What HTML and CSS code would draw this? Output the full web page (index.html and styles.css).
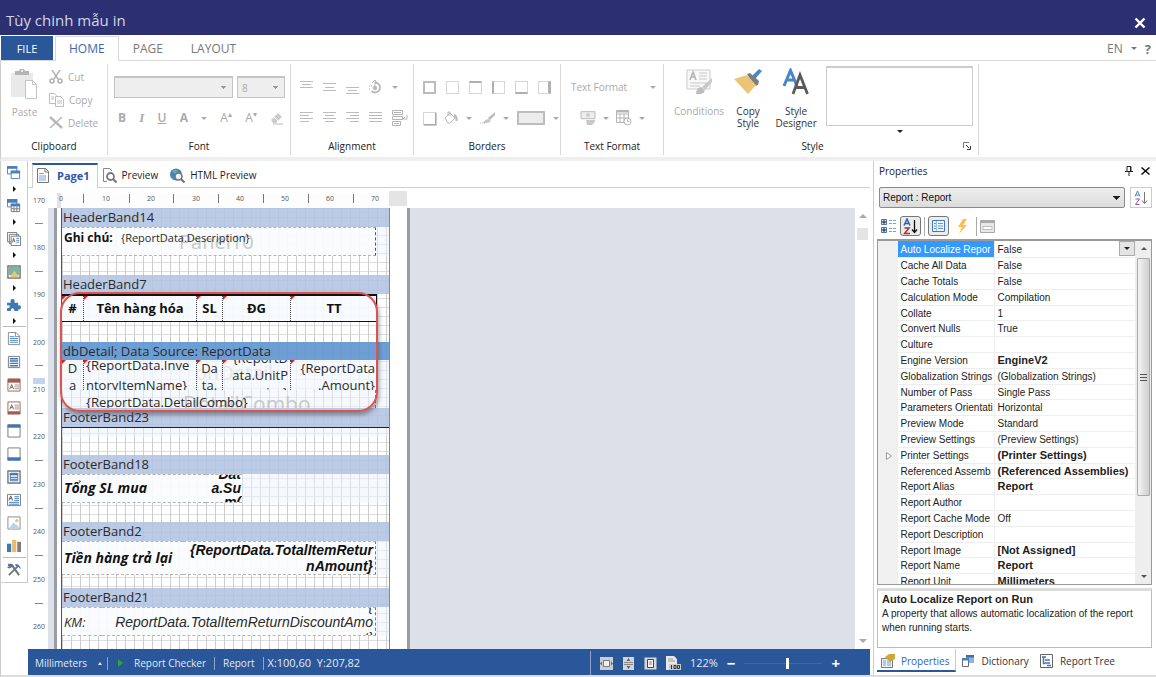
FILE: index.html
```html
<!DOCTYPE html>
<html lang="vi">
<head>
<meta charset="utf-8">
<title>Tùy chinh mẫu in</title>
<link rel="stylesheet" href="styles.css">
</head>
<body>
<header class="titlebar">
  <h1>Tùy chinh mẫu in</h1>
  <button class="close" aria-label="Close"><svg width="12" height="12" viewBox="0 0 12 12"><path d="M1.5 1.5l9 9M10.500 1.500l-9 9" stroke="#fff" stroke-width="2.400"/></svg></button>
</header>

<nav class="tabs">
  <button class="tab file">FILE</button>
  <button class="tab active">HOME</button>
  <button class="tab">PAGE</button>
  <button class="tab">LAYOUT</button>
  <div class="lang"><button class="plain">EN</button><i class="caret dark"></i><button class="plain help">?</button></div>
</nav>

<section class="ribbon">
  <div class="group g-clip">
    <div class="clip">
      <button class="big off">
        <svg width="27" height="30" viewBox="0 0 27 30"><path d="M0 4h22v24H0z" fill="#e9e9e9"/><path d="M4 2h4l1-2h4l1 2h4v4H4z" fill="#b5b5b5"/><circle cx="11" cy="2" r="1" fill="#fff"/><path d="M14.500 11.500h7l4 4v14h-11z" fill="#fff" stroke="#c4c4c4"/><path d="M21.500 11.500v4h4" fill="none" stroke="#c4c4c4"/></svg>
        <span>Paste</span>
      </button>
      <div class="stack">
        <button class="small off"><svg width="14" height="14" viewBox="0 0 14 14" fill="none" stroke="#b4b4b4" stroke-width="1.600"><path d="M3 0l6 9M11 0L5 9"/><circle cx="3" cy="11" r="2"/><circle cx="11" cy="11" r="2"/></svg>Cut</button>
        <button class="small off"><svg width="15" height="14" viewBox="0 0 15 14" fill="#fff" stroke="#bdbdbd"><path d="M.5.500h5l2 2v8h-7z"/><path d="M6.500 3.500h5l3 3v7h-8z"/><path d="M2 4h3M2 6h3M8 8h5M8 10h5"/></svg>Copy</button>
        <button class="small off"><svg width="14" height="13" viewBox="0 0 14 13" fill="none" stroke="#b8b8b8"><path d="M1 1l12 11" stroke-width="2.400"/><path d="M13 1L1 12" stroke-width="1.600"/></svg>Delete</button>
      </div>
    </div>
    <h2>Clipboard</h2>
  </div>

  <div class="group g-font">
    <div class="row r1">
      <select class="sel wide" aria-label="Font family"><option></option></select>
      <select class="sel" aria-label="Font size"><option>8</option></select>
    </div>
    <div class="row r2 letters">
      <button><b>B</b></button><button><b class="it">I</b></button><button><b class="un">U</b></button><button><b>A</b></button><i class="caret"></i><button>A<sup>▴</sup></button><button>A<sup>▾</sup></button>
      <button aria-label="Clear"><svg width="14" height="13" viewBox="0 0 14 13"><path d="M1 8l7-7 4 4-6 6H3z" fill="#ccc"/><path d="M4 5l4 4" stroke="#fff"/><path d="M3 12h10" stroke="#bbb"/></svg></button>
    </div>
    <h2>Font</h2>
  </div>

  <div class="group g-align">
    <div class="row r1">
      <svg width="13" height="16" viewBox="0 0 13 16" stroke="#bcbcbc"><path d="M0 2.500h13M2 5.500h9M0 8.500h13"/></svg>
      <svg width="13" height="16" viewBox="0 0 13 16" stroke="#bcbcbc"><path d="M0 4.500h13M2 8.500h9M0 11.500h13"/></svg>
      <svg width="13" height="16" viewBox="0 0 13 16" stroke="#bcbcbc"><path d="M0 8.500h13M2 11.500h9M0 14.500h13"/></svg>
      <svg width="13" height="16" viewBox="0 0 13 16" fill="none" stroke="#b8b8b8"><path d="M6 3.500a5 5 0 1 1-3.500 8.500" stroke-width="1.800"/><path d="M6 1v9M3 4l3-3 2 3" /><circle cx="6" cy="9" r="1.800" fill="#b8b8b8"/><path d="M0 7h3M0 10h2" stroke-dasharray="1 1"/></svg>
      <i class="caret"></i>
    </div>
    <div class="row r2">
      <svg width="13" height="14" viewBox="0 0 13 14" stroke="#bcbcbc"><path d="M0 1.500h13M0 4.500h9M0 7.500h13M0 10.500h9"/></svg>
      <svg width="13" height="14" viewBox="0 0 13 14" stroke="#bcbcbc"><path d="M0 1.500h13M2 4.500h9M0 7.500h13M2 10.500h9"/></svg>
      <svg width="13" height="14" viewBox="0 0 13 14" stroke="#bcbcbc"><path d="M0 1.500h13M4 4.500h9M0 7.500h13M4 10.500h9"/></svg>
      <svg width="13" height="14" viewBox="0 0 13 14" stroke="#bcbcbc"><path d="M0 1.500h13M0 4.500h13M0 7.500h13M0 10.500h13"/></svg>
      <svg width="16" height="16" viewBox="0 0 16 16" fill="none" stroke="#b4b4b4"><path d="M.5.500h10v4H.5zM.5 6.500h10v3H.5zM.5 11.500h8v4h-8zM2 2.500h7M2 13.500h5"/><path d="M15 5v4h-4l2-2"/></svg>
    </div>
    <h2>Alignment</h2>
  </div>

  <div class="group g-border">
    <div class="row r1">
      <i class="bx all"></i><i class="bx"></i><i class="bx top"></i><i class="bx left"></i><i class="bx bottom"></i><i class="bx right"></i>
    </div>
    <div class="row r2">
      <i class="bx sh"></i>
      <svg class="pour" width="14" height="14" viewBox="0 0 14 14" fill="none" stroke="#b8b8b8"><path d="M1 7l5-5 5 5-5 5H4z"/><path d="M4 5V1h2v4"/><path d="M10 4q3 1 2.500 6" stroke-width="2"/></svg>
      <i class="caret"></i>
      <svg width="15" height="12" viewBox="0 0 15 12"><path d="M15 0v3l-5 5-2-2z" fill="#bbb"/><path d="M9 7l2 2q-3 3-8 2 2-4 6-4z" fill="#c8c8c8"/><path d="M0 11h5" stroke="#bbb" stroke-dasharray="1 1"/></svg>
      <i class="caret"></i><i class="swatch"></i><i class="caret"></i>
    </div>
    <h2>Borders</h2>
  </div>

  <div class="group g-text">
    <div class="row r1"><button class="off">Text Format</button><i class="caret"></i></div>
    <div class="row r2">
      <svg width="16" height="14" viewBox="0 0 16 14"><path d="M1 .7h14v7H1z" fill="#eee" stroke="#bbb"/><circle cx="8" cy="4" r="2" fill="#ccc"/><path d="M6 9h9v2l-3 3H7z" fill="#c9c9c9"/></svg>
      <i class="caret"></i>
      <svg width="16" height="16" viewBox="0 0 16 16" fill="none" stroke="#b5b5b5"><path d="M.5.500h12v12H.5zM.5 4h12M4 4v8M8 4v8M.5 8h12"/><path d="M.5 1.500h12" stroke-width="2"/><circle cx="11.500" cy="11.500" r="3.500" fill="#fff"/><path d="M11.500 9.500v2h2"/></svg>
      <i class="caret"></i>
    </div>
    <h2>Text Format</h2>
  </div>

  <div class="group g-style">
    <div class="styles">
      <button class="big off">
        <svg width="27" height="28" viewBox="0 0 27 28"><path d="M1 2h23v19H1z" fill="#f8f8f8" stroke="#ccc"/><path d="M4 12l3-8 3 8M5 9h4" stroke="#b5b5b5" stroke-width="1.600" fill="none"/><path d="M13 5h8M13 8h8M13 11h8M4 15h17M4 18h10" stroke="#c8c8c8"/><path d="M26 10v4l-7 8-3-3z" fill="#c8c8c8"/><path d="M15 19l4 4q-3 4-9 3 0-6 5-7z" fill="#bcbcbc"/></svg>
        <span>Conditions</span>
      </button>
      <button class="big">
        <svg width="28" height="28" viewBox="0 0 28 28"><path d="M28 3l-3-2-7 7 3 3z" fill="#4a86c5"/><path d="M13 6l3-1 9 8-1 4-4 1z" fill="#7d7d7d"/><path d="M0 11l13-4 9 10-8 9z" fill="#ecc477"/></svg>
        <span>Copy<br>Style</span>
      </button>
      <button class="big">
        <svg width="28" height="28" viewBox="0 0 28 28" fill="none"><path d="M2 18L8.500 2.500 15 18M4.500 12h8" stroke="#4a86c5" stroke-width="3"/><path d="M11 26l7-19 7.500 19M13.500 19.500h9.500" stroke="#5a5a5a" stroke-width="2.800"/></svg>
        <span>Style<br>Designer</span>
      </button>
      <div class="gallery"><div class="gbox"></div><i class="caret black"></i></div>
    </div>
    <h2>Style<svg class="launch" width="8" height="8" viewBox="0 0 8 8"><path d="M.5 6V.5H6" fill="none" stroke="#777"/><path d="M3 3l3 3M7.500 4v3.500H4" stroke="#333" fill="none"/></svg></h2>
  </div>
</section>

<main class="main">
  <aside class="tools">
    <button class="t"><svg viewBox="0 0 15 15"><path d="M.5.500h10v8H.5z" fill="#fff" stroke="#4a7fb8"/><path d="M0 0h11v3H0z" fill="#4a7fb8"/><path d="M4.500 5.500h9v8h-9z" fill="#fff" stroke="#4a7fb8"/><path d="M4 5h10v3H4z" fill="#4a7fb8"/></svg></button><i class="more"></i>
    <button class="t"><svg viewBox="0 0 15 15"><path d="M.5.500h10v8H.5z" fill="#fff" stroke="#4a7fb8"/><path d="M0 0h11v4H0z" fill="#4a7fb8"/><path d="M4.500 5.500h9v8h-9zM4.500 10.500h9M7.500 8v6M10.500 8v6" fill="#fff" stroke="#777"/><path d="M4 5h10v3H4z" fill="#4a7fb8"/></svg></button><i class="more"></i>
    <button class="t"><svg viewBox="0 0 15 15"><path d="M.5.500h10v10H.5zM2.500 2.500h10v10h-10z" fill="#fff" stroke="#777"/><path d="M4.500 4.500h10v10h-10z" fill="#fff" stroke="#777"/><path d="M6 11l1-4 1.500 4" stroke="#555" fill="none"/><path d="M10 7h3M10 9h3M10 11h3" stroke="#4a86c5"/></svg></button><i class="more"></i>
    <button class="t"><svg viewBox="0 0 15 15"><path d="M1 1h13v13H1z" fill="#fff" stroke="#777" stroke-width="1.600"/><path d="M2 2h11v9H2z" fill="#78b5a8"/><path d="M3 13l5-7 5 7z" fill="#ecc477"/></svg></button><i class="more"></i>
    <button class="t"><svg viewBox="0 0 15 15"><path d="M0 5h4q-1-4 2-4t2 4h4v3q3-1 3 2t-3 2v2H8q0-3-2-3t-2 3H0v-3q3 0 3-2T0 8z" fill="#3f78b5"/></svg></button><i class="more"></i>
    <hr>
    <button class="t"><svg viewBox="0 0 15 15"><path d="M1.500.5h8l4 4v9h-12z" fill="#fff" stroke="#888"/><path d="M9 0v5h5" fill="none" stroke="#888"/><path d="M3 5h5M3 7h9M3 9h9M3 11h9" stroke="#4a86c5"/></svg></button>
    <button class="t"><svg viewBox="0 0 15 15"><path d="M1.500 1.500h12v12h-12z" fill="#fff" stroke="#777"/><path d="M3 4h9M3 6.500h9M3 9h9M3 11.500h9" stroke="#3f78b5" stroke-width="1.500"/></svg></button>
    <button class="t"><svg viewBox="0 0 15 15"><path d="M1 1h13v13H1z" fill="#fff" stroke="#a06055"/><path d="M1 1h13v4H1z" fill="#a85a4c"/><path d="M3 12l2-5 2 5M4 10h2" stroke="#666" fill="none"/><path d="M8 7.500h5M8 9.500h5M8 11.500h5" stroke="#999"/></svg></button>
    <button class="t"><svg viewBox="0 0 15 15"><path d="M1 1h13v13H1z" fill="#fff" stroke="#a06055"/><path d="M1 11h13v3H1z" fill="#a85a4c"/><path d="M3 9l2-5 2 5M4 7h2" stroke="#666" fill="none"/><path d="M8 4.500h5M8 6.500h5M8 8.500h5" stroke="#999"/></svg></button>
    <button class="t"><svg viewBox="0 0 15 15"><path d="M1 1h13v13H1z" fill="#fff" stroke="#777"/><path d="M.5.500h14V4H.5z" fill="#3f78b5"/></svg></button>
    <button class="t"><svg viewBox="0 0 15 15"><path d="M1 1h13v13H1z" fill="#fff" stroke="#777"/><path d="M.5 11h14v3.500H.5z" fill="#3f78b5"/></svg></button>
    <button class="t"><svg viewBox="0 0 15 15"><path d="M1 1h13v13H1z" fill="#fff" stroke="#777" stroke-width="1.500"/><path d="M3.500 3.500h8v8h-8zM4 8h7M4 10h7" fill="#dde8f5" stroke="#3f78b5"/><path d="M3 4.500h9" stroke="#3f78b5" stroke-width="2"/></svg></button>
    <button class="t"><svg viewBox="0 0 15 15"><path d="M.5 1.500h14v12H.5z" fill="#fff" stroke="#777"/><path d="M2 8l2-5 2 5M3 6h2" stroke="#555" fill="none"/><path d="M8 4h5M8 6h5M8 8h5M2 10h11M2 12h11" stroke="#3f78b5"/></svg></button>
    <button class="t"><svg viewBox="0 0 15 15"><path d="M1 1h13v13H1z" fill="#fff" stroke="#888"/><path d="M2 13l5-6 3 3 1-1 2 4z" fill="#b9d3ea"/><circle cx="10.500" cy="5" r="1.800" fill="#ecc477"/></svg></button>
    <button class="t"><svg viewBox="0 0 15 15"><path d="M0 5h4.500v9H0z" fill="#3f78b5"/><path d="M5.500 1H10v13H5.500z" fill="#e8bb68"/><path d="M11 3h4v11h-4z" fill="#7d7d7d"/></svg></button>
    <hr>
    <button class="t"><svg viewBox="0 0 15 15"><path d="M2 13L12 3" stroke="#777" stroke-width="2"/><path d="M1 2l4 0 8 11" stroke="#777" stroke-width="2.200" fill="none"/><path d="M0 5l5-4 2 2-4 3zM9 1q5 0 6 6l-3-3-3-1z" fill="#3f78b5"/></svg></button>
  </aside>

  <section class="work">
    <nav class="docs">
      <button class="doc on"><svg width="12" height="15" viewBox="0 0 12 15"><path d="M.5.500h8l3 3v11H.5z" fill="#fff" stroke="#777"/><path d="M8 0v4h4" fill="none" stroke="#777"/><path d="M2 5.500h5M2 8h7M2 10h7M2 12h7" stroke="#7fa6d0"/></svg>Page1</button>
      <button class="doc"><svg width="15" height="15" viewBox="0 0 15 15" fill="none"><path d="M5 13.500H1.500V.5h6l2.500 2.500" stroke="#888"/><circle cx="8.500" cy="8.500" r="3.500" stroke="#777" stroke-width="1.800"/><path d="M11 11l3.500 3.500" stroke="#777" stroke-width="2.200"/></svg>Preview</button>
      <button class="doc"><svg width="15" height="15" viewBox="0 0 15 15"><circle cx="6" cy="6.500" r="6" fill="#4583bd"/><path d="M2 3q3-3 6 0l-3 3zM1 8l3 3-1 1z" fill="#63b389"/><circle cx="8.500" cy="8.500" r="3.500" fill="#eef4fa" stroke="#777" stroke-width="1.600"/><path d="M11 11l3.500 3.500" stroke="#777" stroke-width="2.200"/></svg>HTML Preview</button>
    </nav>

    <svg class="hruler" height="20">
      <rect x="29" y="5" width="350" height="15" fill="#fdfdfd"/><rect x="29" y="5" width="4" height="15" fill="#e2e2e2"/><rect x="361" y="3" width="18" height="15" fill="#e4e4e4"/>
      <g class="num"><text x="33" y="13">0</text><text x="78" y="13">10</text><text x="123" y="13">20</text><text x="168" y="13">30</text><text x="212" y="13">40</text><text x="257" y="13">50</text><text x="302" y="13">60</text><text x="347" y="13">70</text></g>
      <path d="M55.500 6v9M101.500 6v9M145.500 6v9M190.500 6v9M235.500 6v9M280.500 6v9M325.500 6v9" stroke="#777"/>
    </svg>

    <div class="design">
      <svg class="vruler" width="20" height="441">
        <rect x="5" y="170" width="12" height="6" fill="#c3d5ee"/>
        <g class="num"><text x="11" y="-5">170</text><text x="11" y="42">180</text><text x="11" y="89">190</text><text x="11" y="137">200</text><text x="11" y="184">210</text><text x="11" y="231">220</text><text x="11" y="279">230</text><text x="11" y="326">240</text><text x="11" y="374">250</text><text x="11" y="421">260</text></g>
        <path d="M7 15.500h8M7 63.500h8M7 110.500h8M7 157.500h8M7 205.500h8M7 252.500h8M7 300.500h8M7 347.500h8M7 395.500h8" stroke="#888"/>
      </svg>
      <div class="surface">
        <div class="paper">
          <div class="bands">
            <section class="band"><h3>HeaderBand14</h3><div class="area a29">
              <div class="cmp note">Ghi chú:</div><div class="cmp desc"><span class="ghost gh1">Panel10</span><span class="over">{ReportData.Description}</span></div></div></section>
            <section class="band b7"><h3>HeaderBand7</h3>
              <div class="area cells head"><b class="c1">#</b><b class="c2">Tên hàng hóa</b><b class="c3">SL</b><b class="c4">ĐG</b><b class="c5">TT</b></div></section>
            <section class="band db"><h3>dbDetail; Data Source: ReportData</h3>
              <div class="area a48">
                <span class="ghost gh2">onDetail</span><span class="ghost gh3">DetailCombo</span>
                <div class="cells data"><span class="c1">D<br>a</span><span class="c2"><em class="up">{ReportData.Inve<br>ntoryItemName}</em></span><span class="c3">Da<br>ta.</span><span class="c4"><em class="up more-up">{ReportD<br>ata.UnitP<br>rice}</em></span><span class="c5">{ReportData<br>.Amount}</span></div>
                <div class="combo">{ReportData.DetailCombo}</div>
              </div></section>
            <section class="band f23"><h3>FooterBand23</h3><div class="area a10"></div></section>
            <section class="band"><h3>FooterBand18</h3><div class="area a29">
              <div class="cmp sum bi">Tổng SL mua</div><div class="cmp sumv abi"><em>Dat<br>a.Su<br>m(</em></div></div></section>
            <section class="band f2"><h3>FooterBand2</h3><div class="area a34">
              <div class="cmp ret bi">Tiền hàng trả lại</div><div class="cmp retv abi">{ReportData.TotalItemRetur<br>nAmount}</div></div></section>
            <section class="band"><h3>FooterBand21</h3><div class="area a29">
              <div class="cmp km">KM:</div><div class="cmp kmv"><em>{<br>ReportData.TotalItemReturnDiscountAmo<br>unt}</em></div></div></section>
            <div class="callout"></div>
          </div>
        </div>
      </div>
      <div class="vscroll"><i class="up-a"></i><i class="thumb"></i><i class="dn-a"></i></div>
    </div>

    <footer class="status">
      <button class="unit">Millimeters</button><i class="tri"></i><i class="bar"></i><i class="play"></i>
      <button>Report Checker</button><i class="bar"></i><button>Report</button><i class="bar"></i><span class="coords">X:100,60&nbsp; Y:207,82</span>
      <div class="zoomer"><i class="bar tall"></i>
        <svg width="13" height="13" viewBox="0 0 13 13"><path d="M0 0h13v13H0z" fill="#c9ccd2"/><path d="M3.500 3.500h6v6h-6z" fill="#eee" stroke="#777"/><path d="M0 6.500l2-2v4zM13 6.500l-2-2v4z" fill="#666"/></svg>
        <svg width="13" height="13" viewBox="0 0 13 13"><path d="M1 0h11v13H1z" fill="#d5d5d5"/><path d="M2 5.500h9M2 7.500h9" stroke="#888"/><path d="M6.500 1l2 3h-4zM6.500 12l2-3h-4z" fill="#666"/></svg>
        <svg width="13" height="13" viewBox="0 0 13 13"><path d="M.5.500h12v12H.5z" fill="#d8d8d8"/><path d="M3.500 2.500h6v8h-6z" fill="#f5f5f5" stroke="#444"/><path d="M5 5h3M5 7h3" stroke="#888"/></svg>
        <svg width="15" height="15" viewBox="0 0 15 15"><path d="M0 0h8l3 3v11H0z" fill="#e8e8e8"/><path d="M2 3h5M2 5h7" stroke="#999"/><path d="M3 8h12v6H3z" fill="#c9c9c9"/><path d="M5.500 9v4M8 9.500h2v3H8zM11.500 9.500h2v3h-2z" stroke="#333" fill="none"/></svg>
        <span class="pct">122%</span><button class="pm">−</button><div class="track"><i></i></div><button class="pm">+</button>
      </div>
    </footer>
  </section>

  <aside class="props">
    <div class="phead"><h2>Properties</h2>
      <svg width="8" height="10" viewBox="0 0 8 10"><path d="M2 .500h4v5H2zM5.500 1v4M0 5.500h8M4 6v4" fill="none" stroke="#222"/></svg>
      <svg width="9" height="8" viewBox="0 0 9 8"><path d="M.5.500l8 7M8.500.500l-8 7" stroke="#111" stroke-width="1.500"/></svg></div>
    <div class="pobj"><select aria-label="Object"><option>Report : Report</option></select>
      <button class="az" aria-label="Sort"><svg width="14" height="16" viewBox="0 0 14 16" fill="none"><path d="M1 6.500L3.500 1 6 6.500M2 5h3" stroke="#4a86c5"/><path d="M1.500 9h4l-4 5.500h4" stroke="#9c4fb5"/><path d="M10.500 2v11M8 10.500l2.500 3 2.500-3" stroke="#777"/></svg></button></div>
    <div class="pbar">
      <button><svg width="16" height="16" viewBox="0 0 16 16" fill="none"><path d="M.5 1.500h5v5h-5zM.5 9.500h5v5h-5z" fill="#dce9f8" stroke="#3f78b5"/><path d="M1 4h4M3 2v4M1 12h4M3 10v4" stroke="#222"/><path d="M8 2.500h3M12 2.500h3M8 5.500h3M12 5.500h3M8 10.500h3M12 10.500h3M8 13.500h3M12 13.500h3" stroke="#8a9db8"/></svg></button>
      <button class="press"><svg width="15" height="17" viewBox="0 0 15 17" fill="none"><path d="M1 7.500L4 1l3 6.500M2 5.500h4" stroke="#2c62b0" stroke-width="1.500"/><path d="M1.500 10H6l-4.500 5.500H7" stroke="#a83232" stroke-width="1.500"/><path d="M11.500 2v12M9 11.500l2.500 3 2.500-3" stroke="#111" stroke-width="1.300"/></svg></button>
      <i class="sep"></i>
      <button class="press"><svg width="13" height="13" viewBox="0 0 13 13"><path d="M.5.500h12v11H.5z" fill="#eef5fd" stroke="#3f78c5"/><path d="M4.500 1v10" stroke="#9dc1ea"/><path d="M2 3.500h2M6 3.500h5M2 6h2M6 6h5M2 8.500h2M6 8.500h5" stroke="#5d9be0"/></svg></button>
      <button><svg width="11" height="15" viewBox="0 0 11 15"><path d="M6 0L1 8h4l-3 7 8-9H6l4-6z" fill="#f8c04a"/></svg></button>
      <i class="sep"></i>
      <button><svg width="15" height="15" viewBox="0 0 15 15"><path d="M.5 1.500h14v12H.5z" fill="#e8e8e8" stroke="#aaa"/><path d="M1 3h13" stroke="#aaa" stroke-width="2"/><path d="M3 7.500h9v3H3z" fill="#fff" stroke="#bbb"/></svg></button>
    </div>
    <div class="pgrid">
      <div class="pscroll">
      <table>
        <tr class="cur"><td class="gut"></td><th>Auto Localize Repor</th><td>False<button class="drop" aria-label="Open"><i class="caret black"></i></button></td></tr>
        <tr><td class="gut"></td><th>Cache All Data</th><td>False</td></tr>
        <tr><td class="gut"></td><th>Cache Totals</th><td>False</td></tr>
        <tr><td class="gut"></td><th>Calculation Mode</th><td>Compilation</td></tr>
        <tr><td class="gut"></td><th>Collate</th><td>1</td></tr>
        <tr><td class="gut"></td><th>Convert Nulls</th><td>True</td></tr>
        <tr><td class="gut"></td><th>Culture</th><td></td></tr>
        <tr><td class="gut"></td><th>Engine Version</th><td class="bd">EngineV2</td></tr>
        <tr><td class="gut"></td><th>Globalization Strings</th><td>(Globalization Strings)</td></tr>
        <tr><td class="gut"></td><th>Number of Pass</th><td>Single Pass</td></tr>
        <tr><td class="gut"></td><th>Parameters Orientati</th><td>Horizontal</td></tr>
        <tr><td class="gut"></td><th>Preview Mode</th><td>Standard</td></tr>
        <tr><td class="gut"></td><th>Preview Settings</th><td>(Preview Settings)</td></tr>
        <tr><td class="gut"><svg width="6" height="8" viewBox="0 0 6 8"><path d="M.5.500L5.500 4 .5 7.500z" fill="#fff" stroke="#999"/></svg></td><th>Printer Settings</th><td class="bd">(Printer Settings)</td></tr>
        <tr><td class="gut"></td><th>Referenced Assemb</th><td class="bd">(Referenced Assemblies)</td></tr>
        <tr><td class="gut"></td><th>Report Alias</th><td class="bd">Report</td></tr>
        <tr><td class="gut"></td><th>Report Author</th><td></td></tr>
        <tr><td class="gut"></td><th>Report Cache Mode</th><td>Off</td></tr>
        <tr><td class="gut"></td><th>Report Description</th><td></td></tr>
        <tr><td class="gut"></td><th>Report Image</th><td class="bd">[Not Assigned]</td></tr>
        <tr><td class="gut"></td><th>Report Name</th><td class="bd">Report</td></tr>
        <tr><td class="gut"></td><th>Report Unit</th><td class="bd">Millimeters</td></tr>
      </table>
      </div>
      <div class="pvs"><i class="up-a"></i><div class="pthumb"><i></i><i></i><i></i></div><i class="dn-a"></i></div>
    </div>
    <div class="pdesc"><h3>Auto Localize Report on Run</h3><p>A property that allows automatic localization of the report<br>when running starts.</p></div>
    <nav class="ptabs">
      <button class="on"><svg width="15" height="15" viewBox="0 0 15 15"><path d="M.5 5.500h11v9H.5z" fill="#eef4fa" stroke="#778"/><path d="M2 8h3M2 10h3M2 12h3M6 8h4M6 10h4M6 12h4" stroke="#7a9cc5"/><path d="M4 4l4-3h6v5l-5 3z" fill="#cda83c"/></svg>Properties</button>
      <button><svg width="12" height="12" viewBox="0 0 12 12"><path d="M4 0h8v8H4z" fill="#8fb3dc"/><path d="M4 0h8v2.500H4z" fill="#3f6fa8"/><path d="M.5 3.500h6v8h-6z" fill="#fff" stroke="#667"/><path d="M0 3h7v2.500H0z" fill="#4a7fb8"/></svg>Dictionary</button>
      <button><svg width="13" height="14" viewBox="0 0 13 14"><path d="M.5.500h12v13H.5z" fill="#fff" stroke="#666"/><path d="M2 3h4M5 6h5M5 9h5M7 11.500h4M3.500 3v6.500h1.500" stroke="#3f78b5" stroke-width="1.500" fill="none"/></svg>Report Tree</button>
    </nav>
  </aside>
</main>
</body>
</html>
```
FILE: styles.css
```css
* { box-sizing: border-box; }
html, body { height: 100%; }
body { margin: 0; display: flex; flex-direction: column; overflow: hidden; background: #fff; color: #333; font: 10px/12px "Open Sans", "Noto Sans", sans-serif; }
h1, h2, h3, p { margin: 0; font-weight: 400; font-size: inherit; }
button { border: 0; background: none; padding: 0; margin: 0; font: inherit; color: inherit; }
svg { display: block; flex: none; }
i { flex: none; }

.titlebar { height: 35px; flex: none; background: #2c3072; display: flex; align-items: center; justify-content: space-between; padding: 4px 10px 0 6px; }
.titlebar h1 { font-size: 15px; line-height: 24px; color: #d3d5e6; }
.close { padding-top: 6px; }

.tabs { height: 26px; flex: none; display: flex; align-items: flex-end; border-bottom: 1px solid #d8d8d8; padding-left: 1px; }
.tab { height: 24px; font-size: 12px; padding: 2px 14px 0; color: #777; }
.tab.file { background: #2a579a; color: #fff; width: 52px; font-size: 11px; margin-right: 2px; }
.tab.active { border: 1px solid #d8d8d8; border-bottom: 0; background: #fff; color: #3d66a8; height: 25px; margin-bottom: -1px; padding: 0 13px; }
.lang { margin-left: auto; align-self: center; display: flex; align-items: center; gap: 8px; padding: 2px 5px 0 0; color: #777; font-size: 12px; }
.help { font-weight: 700; font-size: 13px; }
.caret { border: 3px solid transparent; border-top-color: #aaa; border-bottom: 0; width: 6px; height: 3px; }
.caret.dark { border-top-color: #777; }
.caret.black { border-top-color: #222; }

.ribbon { height: 100px; flex: none; display: flex; border-bottom: 4px solid #eee; border-left: 1px solid #ccc; padding: 3px 0 2px; }
.group { display: flex; flex-direction: column; border-right: 1px solid #dadada; flex: none; }
.group h2 { text-align: center; margin-top: auto; line-height: 18px; color: #222; position: relative; }
.g-clip { width: 107px; }
.g-font { width: 183px; }
.g-align { width: 123px; }
.g-border { width: 147px; }
.g-text { width: 103px; }
.g-style { width: 315px; }
.row { display: flex; align-items: center; flex: none; }
.r1 { height: 32px; margin-top: 7px; }
.r2 { height: 30px; }
.off { color: #aaa; }
.clip { display: flex; align-items: flex-start; padding: 1px 0 0 10px; gap: 11px; }
.big { display: flex; flex-direction: column; align-items: center; gap: 7px; }
.clip .big { margin-top: 4px; }
.stack { display: flex; flex-direction: column; }
.small { display: flex; align-items: center; gap: 5px; height: 23px; }
.sel { height: 22px; width: 48px; border: 1px solid #c4c4c4; border-top-width: 2px; color: #aaa; font: inherit; padding: 0 4px; appearance: none; background: conic-gradient(from -45deg at 50% 100%, #999 90deg, transparent 0) right 6px center / 6px 3px no-repeat, #eee; }
.sel.wide { width: 119px; }
.g-font .r1 { padding-left: 6px; gap: 4px; }
.letters { padding: 0 6px 0 10px; justify-content: space-between; font-size: 12px; line-height: 18px; color: #aaa; }
.letters .it { font-style: italic; font-family: "Liberation Serif", serif; font-size: 13px; }
.letters .un { text-decoration: underline; font-weight: 600; }
.letters sup { font-size: 8px; line-height: 8px; }
.g-align .row, .g-border .row { padding-left: 9px; gap: 10px; }
.g-border .r2 { gap: 8px; }
.bx { width: 13px; height: 13px; border: 1px solid #d6d6d6; }
.bx.all { border: 2px solid #bcbcbc; }
.bx.top { border-top: 2px solid #b0b0b0; }
.bx.left { border-left: 2px solid #b0b0b0; }
.bx.bottom { border-bottom: 2px solid #b0b0b0; }
.bx.right { border-right: 3px solid #b0b0b0; }
.bx.sh { border-right-color: #aaa; border-bottom-color: #aaa; box-shadow: 1px 1px #ccc; }
.swatch { width: 28px; height: 14px; background: #ececec; border: 2px solid #bdbdbd; }
.g-text .r1 { justify-content: space-between; padding: 0 7px 0 10px; }
.g-text .r2 { padding-left: 19px; gap: 7px; }
.styles { display: flex; padding: 4px 5px 0 10px; }
.styles .big { gap: 9px; height: 64px; margin-right: 10px; }
.styles .big + .big { width: 28px; margin-right: 14px; }
.styles .big + .big + .big { width: 40px; margin-right: 10px; }
.gallery { flex: 1; display: flex; flex-direction: column; align-items: center; gap: 4px; }
.gbox { align-self: stretch; height: 60px; border: 1px solid #ccc; border-top: 2px solid #ccc; margin-top: -2px; }
.launch { position: absolute; right: 7px; top: 5px; }
.g-style h2 { padding-right: 17px; }

.main { flex: 1; min-height: 0; display: flex; border-bottom: 2px solid #ddd; border-left: 1px solid #ccc; }
.tools { width: 27px; flex: none; align-self: flex-start; border: 1px solid #ccc; border-width: 0 1px 1px 0; display: flex; flex-direction: column; align-items: center; padding-bottom: 1px; }
.t { height: 23px; display: grid; place-items: center; padding-top: 1px; }
.t svg { width: 14px; height: 14px; }
.more { height: 10px; display: flex; align-items: center; }
.more::before { content: ""; border: 3px solid transparent; border-left-color: #111; border-right: 0; }
.tools hr { width: 23px; border: 0; border-top: 1px solid #bbb; margin: 0; }

.work { flex: 1; min-width: 0; display: flex; flex-direction: column; background: #fff; }
.docs { height: 27px; flex: none; display: flex; align-items: flex-end; border-bottom: 1px solid #d0d0d0; padding-left: 4px; gap: 4px; margin-right: 3px; }
.doc { display: flex; align-items: center; gap: 5px; height: 24px; padding-right: 8px; color: #222; }
.doc.on { border-top: 2px solid #2a57a5; border-right: 1px solid #d0d0d0; border-left: 1px solid #d0d0d0; background: #fff; margin-bottom: -1px; font-weight: 700; font-size: 11px; color: #2f55a8; padding: 0 7px 2px 4px; height: 25px; gap: 8px; }
.hruler { width: 100%; }
.num { font: 7px "Open Sans", sans-serif; text-anchor: middle; fill: #555; }
.design { flex: 1; min-height: 0; display: flex; }
.vruler { overflow: visible; }
.surface { flex: 1; min-width: 0; background: #dce1e9; padding-left: 6px; display: flex; overflow: hidden; }
.paper { background: #fff; border: solid #9a9da3; border-width: 0 3px; padding: 0 17px 0 4px; align-self: flex-start; }
.bands { position: relative; width: 329px; font-size: 13px; line-height: 18px; color: #2a2a2a; border-right: 1px solid #888; border-left: 1px solid #555;
  background: repeating-linear-gradient(90deg, #cdcdcd 0 1px, transparent 1px 9px), repeating-linear-gradient(#dedede 0 1px, transparent 1px 9px), #fff; }
.band { padding-bottom: 19px; }
.band h3 { height: 19px; padding-left: 1px; background: rgba(178, 196, 225, .88); overflow: hidden; white-space: nowrap; }
.band.b7 { padding-bottom: 20px; }
.band.f2 { padding-bottom: 13px; }
.band.db h3 { background: rgba(98, 151, 208, .92); height: 18px; }
.band.db { padding-bottom: 0; }
.band.f23 { padding-bottom: 18px; }
.area { position: relative; background: rgba(235, 241, 250, .5); }
.a29 { height: 29px; }
.a48 { height: 48px; }
.a10 { height: 10px; border-top: 1px solid #222; }
.a34 { height: 34px; }
.cmp { position: absolute; top: 0; overflow: hidden; height: 29px; background: rgba(251, 252, 254, .88); border: 1px dashed #b5b5b5; border-width: 1px 0; white-space: nowrap; }
.ghost { position: absolute; color: #c8c8c8; white-space: nowrap; }
.note { left: 0; width: 57px; font-size: 12px; line-height: 20px; font-weight: 700; color: #111; padding-left: 2px; }
.desc { left: 57px; width: 257px; font-size: 11px; line-height: 20px; padding-left: 2px; border-right: 1px dashed #555; }
.over { position: relative; }
.gh1 { left: 60px; top: 4px; font-size: 20px; }
.cells { display: flex; overflow: hidden; width: 315px; }
.cells > * { position: relative; flex: none; border-right: 1px dotted #444; overflow: hidden; text-align: center; background: rgba(247, 250, 254, .85); }
.cells > *::before { content: ""; position: absolute; left: 0; top: 0; border: 2px solid #f01818; border-right-color: transparent; border-bottom-color: transparent; }
.c1 { width: 22px; }
.c2 { width: 113px; }
.c3 { width: 26px; }
.c4 { width: 68px; }
.c5 { width: 86px; }
.cells .c5 { border-right: 0; }
.head { height: 28px; border: solid #111; border-width: 2px 1px 1px 0; line-height: 24px; color: #111; }
.data { height: 30px; font-size: 13px; line-height: 17px; border-right: 1px solid #333; }
.data > * { background: rgba(247, 250, 254, .6); }
.data .c5 { text-align: right; padding-right: 2px; }
.up, .sumv em, .kmv em { position: absolute; right: 2px; font-style: inherit; white-space: nowrap; text-align: right; }
.c2 .up { top: -5px; left: 2px; text-align: left; line-height: 20px; }
.more-up { top: -10px; }
.gh2 { left: 133px; top: 4px; font-size: 20px; }
.gh3 { left: 121px; top: 34px; font-size: 21px; line-height: 20px; }
.combo { position: absolute; left: 22px; top: 30px; right: 13px; height: 18px; padding-left: 2px; line-height: 24px; white-space: nowrap; overflow: hidden; border-right: 1px dashed #777; }
.bi { font-weight: 700; font-style: italic; font-size: 14px; color: #111; line-height: 26px; padding-left: 2px; left: 0; }
.abi { font: italic 700 14px/16px "Liberation Sans", sans-serif; color: #111; }
.sum { width: 144px; }
.sumv { left: 144px; width: 36px; line-height: 14px; }
.sumv em { right: 1px; top: -8px; }
.ret { width: 121px; height: 34px; line-height: 32px; }
.retv { left: 121px; width: 193px; height: 34px; text-align: right; padding-right: 2px; border-right: 1px dashed #777; }
.km { left: 0; width: 40px; font-style: italic; padding-left: 2px; line-height: 28px; }
.kmv { left: 40px; width: 274px; font: italic 14px/16px "Liberation Sans", sans-serif; border-right: 1px dashed #777; }
.kmv em { top: -10px; }
.callout { position: absolute; left: -2px; top: 84px; width: 318px; height: 120px; border: 2px solid #dc5450; border-radius: 20px; box-shadow: 1px 3px 4px rgba(60, 60, 70, .5); }
.vscroll { width: 18px; flex: none; background: #fff; display: flex; flex-direction: column; align-items: center; padding: 6px 3px 6px 0; }
.up-a { border: 4px solid transparent; border-top: 0; border-bottom-color: #aaa; }
.dn-a { border: 4px solid transparent; border-bottom: 0; border-top-color: #aaa; margin-top: auto; }
.thumb { width: 11px; height: 12px; background: #e4e4e4; margin-top: 10px; }

.status { height: 26px; flex: none; background: #2a579a; color: #e2e9f4; display: flex; align-items: center; padding: 2px 0 0 7px; margin-right: 3px; gap: 8px; white-space: nowrap; }
.bar { width: 1px; height: 13px; background: #8fa5cb; }
.tri { border: 2px solid transparent; border-top: 0; border-bottom: 3px solid #e2e9f4; margin-left: 3px; }
.tri + .bar { margin-left: -3px; }
.play { border: 4px solid transparent; border-left: 5px solid #35a03a; border-right: 0; margin: 0 3px 0 2px; }
.coords { margin-left: -4px; font-size: 11px; }
.zoomer { margin-left: auto; display: flex; align-items: center; gap: 9px; align-self: stretch; padding-right: 30px; }
.tall { height: 24px; }
.pct { font-size: 11px; }
.pm { font-size: 15px; font-weight: 700; color: #fff; }
.track { width: 78px; height: 1px; background: #3f68a8; display: flex; align-items: center; justify-content: center; }
.track i { width: 3px; height: 11px; background: #fff; margin-left: 8px; }

.props { width: 283px; flex: none; display: flex; flex-direction: column; border-left: 1px solid #ccc; padding: 0 4px 0 3px; }
.phead { display: flex; align-items: center; height: 20px; gap: 8px; padding: 0 2px 0 2px; color: #222; }
.phead h2 { flex: 1; }
.pobj { display: flex; align-items: center; gap: 5px; height: 33px; padding-left: 2px; }
.pobj select { flex: 1; height: 21px; appearance: none; border: 1px solid #8a8a8a; border-radius: 2px; font: 10px "Liberation Sans", sans-serif; color: #111; padding: 0 3px; background: conic-gradient(from -45deg at 50% 100%, #222 90deg, transparent 0) right 4px center / 7px 4px no-repeat, #e6e6e6; background: conic-gradient(from -45deg at 50% 100%, transparent 90deg, transparent 0), linear-gradient(45deg, transparent 50%, transparent 0), #e6e6e6; background: conic-gradient(from 315deg at 50% 100%, #222 90deg, transparent 0) right 4px center / 7px 4px no-repeat, linear-gradient(#eee, #dcdcdc); }
.az { width: 22px; height: 21px; border: 1px solid #ccc; display: grid; place-items: center; }
.pbar { display: flex; align-items: center; height: 24px; padding-left: 4px; gap: 3px; }
.press { border: 1px solid #777; border-radius: 3px; background: #ececec; width: 21px; height: 20px; display: grid; place-items: center; }
.sep { width: 1px; height: 19px; background: #aaa; }
.pbar .press + button { margin: 0 5px; }
.pgrid { flex: 1; min-height: 0; display: flex; border: 1px solid #999; border-top-width: 2px; margin-top: 1px; }
.pscroll { flex: 1; min-width: 0; overflow: hidden; }
table { width: 100%; border-collapse: collapse; table-layout: fixed; font: 10px/14px "Liberation Sans", sans-serif; color: #222; }
tr { height: 16px; }
tr:nth-child(5n) { height: 15px; }
td, th { padding: 1px 0 0 3px; font-weight: 400; text-align: left; white-space: nowrap; overflow: hidden; border-bottom: 1px solid #eee; border-right: 1px solid #eee; height: inherit; line-height: 13px; }
.gut { width: 19px; background: #f0f0f0; border-color: #f0f0f0; padding-left: 8px; }
th { width: 97px; }
.cur th { background: #3399ff; color: #fff; }
.cur td { position: relative; }
.drop { position: absolute; right: 0; top: 0; width: 16px; height: 15px; background: #e4e4e4; border: 1px solid #aaa; display: grid; place-items: center; }
.bd { font-weight: 700; font-size: 11px; }
.pvs { width: 15px; flex: none; background: #eee; display: flex; flex-direction: column; align-items: center; padding: 6px 0; }
.pvs .up-a { border-bottom-color: #555; border-width: 0 3px 3px; }
.pvs .dn-a { border-top-color: #555; border-width: 3px 3px 0; }
.pthumb { width: 13px; height: 72%; margin-top: 8px; border: 1px solid #aaa; background: linear-gradient(90deg, #f4f4f4, #cfcfcf); border-radius: 1px; display: flex; flex-direction: column; justify-content: center; align-items: center; gap: 2px; }
.pthumb i { width: 7px; height: 1px; background: #555; }
.pdesc { height: 60px; flex: none; margin-top: 3px; border: 1px solid #bbb; border-top: 3px solid #ddd; padding: 1px 4px; font: 10px/14px "Liberation Sans", sans-serif; color: #222; white-space: nowrap; overflow: hidden; }
.pdesc h3 { font-weight: 700; font-size: 11px; line-height: 15px; }
.ptabs { display: flex; height: 27px; flex: none; gap: 11px; padding: 1px 0 3px; }
.ptabs button { display: flex; align-items: center; gap: 7px; color: #333; }
.ptabs .on { color: #2f63c0; border-bottom: 2px solid #2a579a; border-right: 1px solid #ccc; padding: 2px 6px 0 4px; gap: 5px; margin-right: -5px; }
```
